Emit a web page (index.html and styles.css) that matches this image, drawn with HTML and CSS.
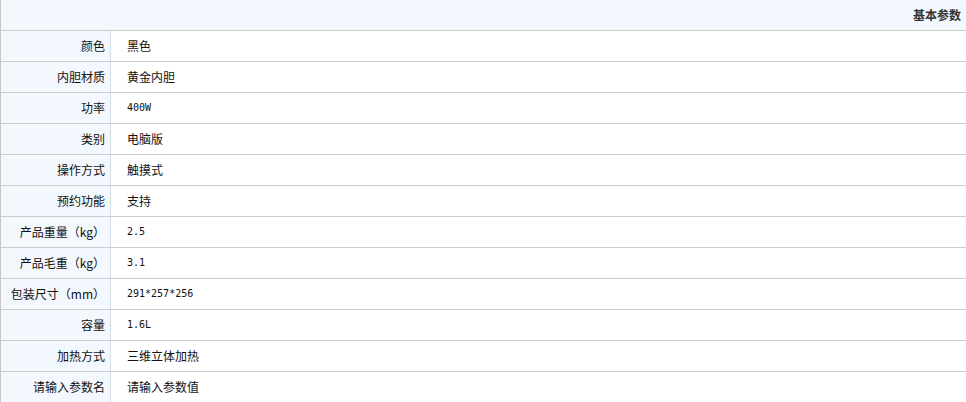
FILE: index.html
```html
<!DOCTYPE html>
<html lang="zh">
<head>
<meta charset="utf-8">
<title>基本参数</title>
<link rel="stylesheet" href="styles.css">
</head>
<body>
<div class="spec">
  <div class="spec-head">基本参数</div>
  <div class="spec-row"><div class="spec-label">颜色</div><div class="spec-value">黑色</div></div>
  <div class="spec-row"><div class="spec-label">内胆材质</div><div class="spec-value">黄金内胆</div></div>
  <div class="spec-row"><div class="spec-label">功率</div><div class="spec-value num">400W</div></div>
  <div class="spec-row"><div class="spec-label">类别</div><div class="spec-value">电脑版</div></div>
  <div class="spec-row"><div class="spec-label">操作方式</div><div class="spec-value">触摸式</div></div>
  <div class="spec-row"><div class="spec-label">预约功能</div><div class="spec-value">支持</div></div>
  <div class="spec-row"><div class="spec-label">产品重量（kg）</div><div class="spec-value num">2.5</div></div>
  <div class="spec-row"><div class="spec-label">产品毛重（kg）</div><div class="spec-value num">3.1</div></div>
  <div class="spec-row"><div class="spec-label">包装尺寸（mm）</div><div class="spec-value num">291*257*256</div></div>
  <div class="spec-row"><div class="spec-label">容量</div><div class="spec-value num">1.6L</div></div>
  <div class="spec-row"><div class="spec-label">加热方式</div><div class="spec-value">三维立体加热</div></div>
  <div class="spec-row"><div class="spec-label">请输入参数名</div><div class="spec-value">请输入参数值</div></div>
</div>
</body>
</html>
```
FILE: styles.css
```css
html, body {
  margin: 0;
  padding: 0;
  background: #fff;
}
body {
  font-family: "Noto Sans CJK SC", "Liberation Sans", sans-serif;
  font-size: 12px;
  color: #111;
}
.spec {
  width: 966px;
  border-left: 1px solid #c8c8c8;
  box-sizing: border-box;
}
.spec-head {
  height: 30px;
  line-height: 30px;
  background: #f2f8fe;
  border-bottom: 1px solid #cccccc;
  text-align: right;
  padding-right: 5px;
  font-weight: bold;
  color: #333;
}
.spec-row {
  display: flex;
  height: 30px;
  line-height: 30px;
  border-bottom: 1px solid #cccccc;
}
.spec-label {
  width: 110px;
  flex: none;
  box-sizing: border-box;
  background: #f2f8fe;
  border-right: 1px solid #d5dde5;
  text-align: right;
  padding-right: 5px;
  white-space: nowrap;
}
.spec-value {
  padding-left: 16px;
}
.spec-value.num {
  font-family: "DejaVu Sans Mono", "Liberation Mono", monospace;
  font-size: 10px;
}
```
